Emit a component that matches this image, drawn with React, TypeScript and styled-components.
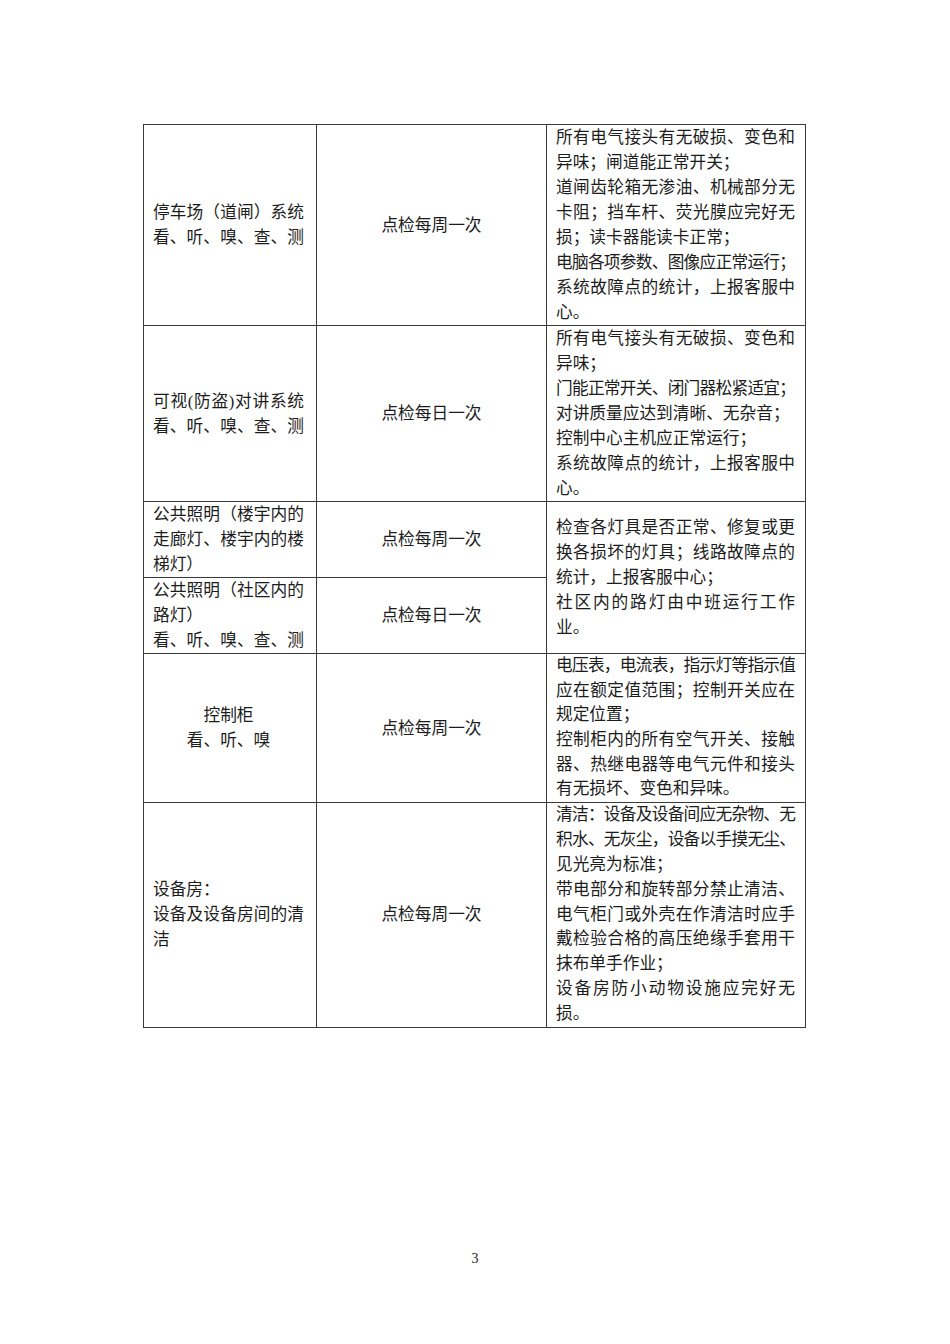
import React from 'react';
import styled, { createGlobalStyle } from 'styled-components';

type Align = 'justify' | 'left' | 'center';

interface ILine {
  text: string;
  align?: Align;
  tight?: boolean;
}

interface IRow {
  item: ILine[];
  cycle: string;
  content?: ILine[];
  contentRowSpan?: number;
  lineHeight?: number;
}

const J = (text: string, tight = false): ILine => ({ text, align: 'justify', tight });
const L = (text: string): ILine => ({ text, align: 'left' });
const C = (text: string): ILine => ({ text, align: 'center' });

const rows: IRow[] = [
  {
    item: [J('停车场（道闸）系统'), J('看、听、嗅、查、测')],
    cycle: '点检每周一次',
    content: [
      J('所有电气接头有无破损、变色和'),
      L('异味；闸道能正常开关；'),
      J('道闸齿轮箱无渗油、机械部分无'),
      J('卡阻；挡车杆、荧光膜应完好无'),
      L('损；读卡器能读卡正常；'),
      J('电脑各项参数、图像应正常运行；', true),
      J('系统故障点的统计，上报客服中'),
      L('心。'),
    ],
  },
  {
    item: [J('可视(防盗)对讲系统'), J('看、听、嗅、查、测')],
    cycle: '点检每日一次',
    content: [
      J('所有电气接头有无破损、变色和'),
      L('异味；'),
      J('门能正常开关、闭门器松紧适宜；', true),
      L('对讲质量应达到清晰、无杂音；'),
      L('控制中心主机应正常运行；'),
      J('系统故障点的统计，上报客服中'),
      L('心。'),
    ],
  },
  {
    item: [J('公共照明（楼宇内的'), J('走廊灯、楼宇内的楼'), L('梯灯）')],
    cycle: '点检每周一次',
    content: [
      J('检查各灯具是否正常、修复或更'),
      J('换各损坏的灯具；线路故障点的'),
      L('统计，上报客服中心；'),
      J('社区内的路灯由中班运行工作'),
      L('业。'),
    ],
    contentRowSpan: 2,
  },
  {
    item: [J('公共照明（社区内的'), L('路灯）'), J('看、听、嗅、查、测')],
    cycle: '点检每日一次',
  },
  {
    item: [C('控制柜'), C('看、听、嗅')],
    cycle: '点检每周一次',
    lineHeight: 24.7,
    content: [
      J('电压表，电流表，指示灯等指示值', true),
      J('应在额定值范围；控制开关应在'),
      L('规定位置；'),
      J('控制柜内的所有空气开关、接触'),
      J('器、热继电器等电气元件和接头'),
      L('有无损坏、变色和异味。'),
    ],
  },
  {
    item: [L('设备房：'), J('设备及设备房间的清'), L('洁')],
    cycle: '点检每周一次',
    lineHeight: 24.85,
    content: [
      J('清洁：设备及设备间应无杂物、无', true),
      J('积水、无灰尘，设备以手摸无尘、', true),
      L('见光亮为标准；'),
      J('带电部分和旋转部分禁止清洁、'),
      J('电气柜门或外壳在作清洁时应手'),
      J('戴检验合格的高压绝缘手套用干'),
      L('抹布单手作业；'),
      J('设备房防小动物设施应完好无'),
      L('损。'),
    ],
  },
];

function CellLines({ lines, lineHeight }: { lines: ILine[]; lineHeight: number }) {
  return (
    <>
      {lines.map((line, i) => (
        <Line key={i} $align={line.align ?? 'left'} $tight={!!line.tight} $height={lineHeight}>
          {line.text}
        </Line>
      ))}
    </>
  );
}

export default function App() {
  return (
    <Page>
      <GlobalStyle />
      <Sheet>
        <InspectionTable>
          <colgroup>
            <col style={{ width: 173 }} />
            <col style={{ width: 230 }} />
            <col style={{ width: 259 }} />
          </colgroup>
          <tbody>
            {rows.map((row, i) => (
              <tr key={i}>
                <ItemCell>
                  <CellLines lines={row.item} lineHeight={25} />
                </ItemCell>
                <CycleCell>{row.cycle}</CycleCell>
                {row.content && (
                  <ContentCell rowSpan={row.contentRowSpan ?? 1}>
                    <CellLines lines={row.content} lineHeight={row.lineHeight ?? 25} />
                  </ContentCell>
                )}
              </tr>
            ))}
          </tbody>
        </InspectionTable>
      </Sheet>
      <PageNumber>3</PageNumber>
    </Page>
  );
}

const GlobalStyle = createGlobalStyle`
  html, body {
    margin: 0;
    padding: 0;
    background: #ffffff;
  }
  body {
    font-family: "Liberation Serif", "Noto Sans CJK SC", serif;
    color: #1a1a1a;
  }
`;

const Page = styled.div`
  width: 950px;
  height: 1344px;
  box-sizing: border-box;
  padding-top: 124px;
  display: flex;
  flex-direction: column;
  background: #ffffff;
`;

const Sheet = styled.div`
  padding-left: 143px;
`;

const InspectionTable = styled.table`
  border-collapse: collapse;
  table-layout: fixed;
  width: 663px;
  font-size: 16.7px;
  line-height: 25px;
`;

const BaseCell = styled.td`
  border: 1px solid #3a3a3a;
  padding: 0;
  vertical-align: middle;
  font-family: "Liberation Serif", "Noto Sans CJK SC", serif;
  color: #1c1c1c;
`;

const ItemCell = styled(BaseCell)`
  padding: 0 12px 0 9px;
`;

const CycleCell = styled(BaseCell)`
  text-align: center;
`;

const ContentCell = styled(BaseCell)`
  padding: 0 10px 0 9px;
`;

const Line = styled.div<{ $align: Align; $tight: boolean; $height: number }>`
  height: ${(p) => p.$height}px;
  line-height: ${(p) => p.$height}px;
  text-align: ${(p) => p.$align};
  text-align-last: ${(p) => p.$align};
  letter-spacing: ${(p) => (p.$tight ? '-1px' : '0')};
  white-space: nowrap;
`;

const PageNumber = styled.div`
  margin-top: 223px;
  text-align: center;
  font-family: "Liberation Serif", serif;
  font-size: 14px;
  color: #222222;
`;
